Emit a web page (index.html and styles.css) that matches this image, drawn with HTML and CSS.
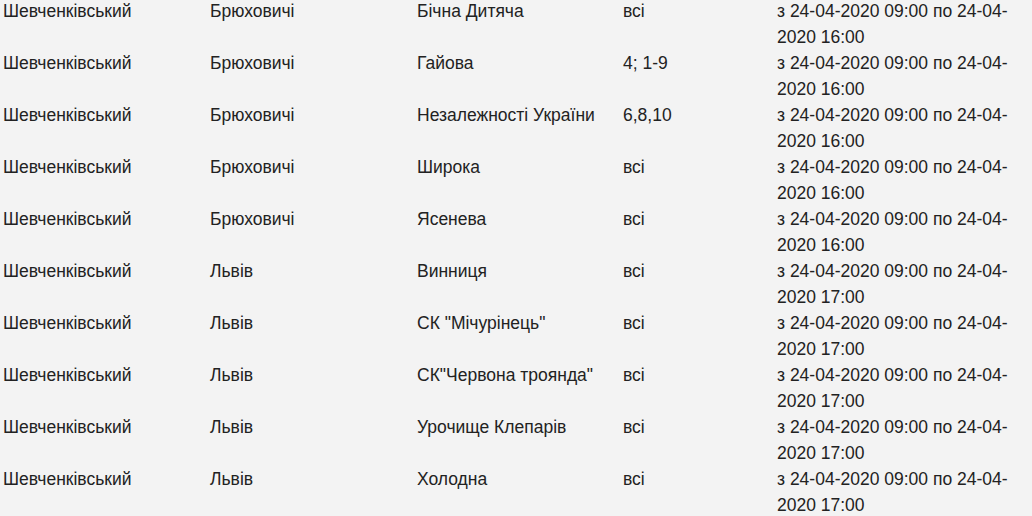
FILE: index.html
```html
<!DOCTYPE html>
<html lang="uk">
<head>
<meta charset="utf-8">
<link rel="stylesheet" href="styles.css">
</head>
<body>
<table class="outages">
  <colgroup>
    <col class="c-district"><col class="c-town"><col class="c-street"><col class="c-house"><col class="c-time">
  </colgroup>
  <tbody>
    <tr><td>Шевченківський</td><td>Брюховичі</td><td>Бічна Дитяча</td><td>всі</td><td>з 24-04-2020 09:00 по 24-04-2020 16:00</td></tr>
    <tr><td>Шевченківський</td><td>Брюховичі</td><td>Гайова</td><td>4; 1-9</td><td>з 24-04-2020 09:00 по 24-04-2020 16:00</td></tr>
    <tr><td>Шевченківський</td><td>Брюховичі</td><td>Незалежності України</td><td>6,8,10</td><td>з 24-04-2020 09:00 по 24-04-2020 16:00</td></tr>
    <tr><td>Шевченківський</td><td>Брюховичі</td><td>Широка</td><td>всі</td><td>з 24-04-2020 09:00 по 24-04-2020 16:00</td></tr>
    <tr><td>Шевченківський</td><td>Брюховичі</td><td>Ясенева</td><td>всі</td><td>з 24-04-2020 09:00 по 24-04-2020 16:00</td></tr>
    <tr><td>Шевченківський</td><td>Львів</td><td>Винниця</td><td>всі</td><td>з 24-04-2020 09:00 по 24-04-2020 17:00</td></tr>
    <tr><td>Шевченківський</td><td>Львів</td><td>СК "Мічурінець"</td><td>всі</td><td>з 24-04-2020 09:00 по 24-04-2020 17:00</td></tr>
    <tr><td>Шевченківський</td><td>Львів</td><td>СК"Червона троянда"</td><td>всі</td><td>з 24-04-2020 09:00 по 24-04-2020 17:00</td></tr>
    <tr><td>Шевченківський</td><td>Львів</td><td>Урочище Клепарів</td><td>всі</td><td>з 24-04-2020 09:00 по 24-04-2020 17:00</td></tr>
    <tr><td>Шевченківський</td><td>Львів</td><td>Холодна</td><td>всі</td><td>з 24-04-2020 09:00 по 24-04-2020 17:00</td></tr>
  </tbody>
</table>
</body>
</html>
```
FILE: styles.css
```css
html, body {
  margin: 0;
  padding: 0;
  background: #f3f3f3;
}
body {
  font-family: "Liberation Sans", Arial, sans-serif;
  font-size: 17.5px;
  line-height: 26px;
  color: #222222;
  overflow: hidden;
}
.outages {
  width: 1032px;
  margin-top: -2px;
  border-collapse: collapse;
  table-layout: fixed;
}
.c-district { width: 207px; }
.c-town { width: 207px; }
.c-street { width: 206px; }
.c-house { width: 154px; }
.c-time { width: 258px; }
.outages td {
  padding: 0 3px;
  height: 52px;
  vertical-align: top;
}
```
